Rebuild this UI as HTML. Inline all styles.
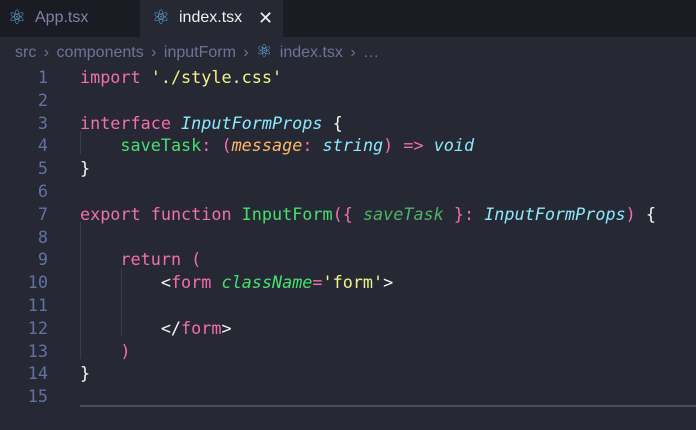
<!DOCTYPE html>
<html><head><style>
html,body{margin:0;height:411px}
body{width:696px;overflow:hidden;background:#262833;font-family:"Liberation Sans",sans-serif;position:relative}
.tabs{position:absolute;left:0;top:0;width:696px;height:37px;background:#1b1c23}
.tab{position:absolute;top:0;height:37px;line-height:36px;font-size:16px}
.ic{position:absolute;top:0;font-size:20px;color:#61b0e0}
.bc{position:absolute;top:41px;left:15px;font-size:16px;color:#6d7499;line-height:20px;word-spacing:3px}
.code{position:absolute;left:0;top:66px;font-family:"DejaVu Sans Mono",monospace;font-size:16.8px;line-height:22.75px;white-space:pre;color:#f8f8f2}
.ln{position:absolute;left:0;width:48px;text-align:right;color:#6272a4}
.tx{position:absolute;left:80px}
.k{color:#f270ab}.s{color:#f1f38c}.g{color:#45e070}.c{color:#8be9fd;font-style:italic}.o{color:#ffb86c;font-style:italic}.gi{color:#4fb36a;font-style:italic}.gi2{color:#45e070;font-style:italic}
.guide{position:absolute;width:1px;background:#3a3d4c}
</style></head><body>
<div class="tabs">
<div class="tab" style="left:0;width:138px;color:#7d84a8"><span class="ic" style="left:8px">⚛</span><span style="position:absolute;left:35px">App.tsx</span></div>
<div class="tab" style="left:140px;width:143px;background:#262833;color:#f0f0f0"><span class="ic" style="left:12px">⚛</span><span style="position:absolute;left:39px">index.tsx</span><span style="position:absolute;left:118px;font-size:18px">✕</span></div>
</div>
<div class="bc">src › components › inputForm › <span style="color:#61b0e0;font-size:18px">⚛</span> index.tsx › …</div>
<div class="guide" style="left:80px;top:131px;height:23px"></div>
<div class="guide" style="left:80px;top:222px;height:137px"></div>
<div class="guide" style="left:121px;top:268px;height:69px"></div>
<div style="position:absolute;left:80px;top:405px;width:616px;height:2px;background:#4a4d5c"></div>
<div class="code">
<div class="ln" style="top:0">1</div><div class="tx" style="top:0"><span class="k">import</span> <span class="s">'./style.css'</span></div>
<div class="ln" style="top:22.8px">2</div>
<div class="ln" style="top:45.6px">3</div><div class="tx" style="top:45.6px"><span class="k">interface</span> <span class="c">InputFormProps</span> {</div>
<div class="ln" style="top:68.4px">4</div><div class="tx" style="top:68.4px">    <span class="g">saveTask</span><span class="k">:</span> <span class="k">(</span><span class="o">message</span><span class="k">:</span> <span class="c">string</span><span class="k">) =&gt;</span> <span class="c">void</span></div>
<div class="ln" style="top:91.2px">5</div><div class="tx" style="top:91.2px">}</div>
<div class="ln" style="top:114px">6</div>
<div class="ln" style="top:136.8px">7</div><div class="tx" style="top:136.8px"><span class="k">export</span> <span class="k">function</span> <span class="g">InputForm</span><span class="k">({</span> <span class="gi">saveTask</span> <span class="k">}:</span> <span class="c">InputFormProps</span><span class="k">)</span> {</div>
<div class="ln" style="top:159.6px">8</div>
<div class="ln" style="top:182.4px">9</div><div class="tx" style="top:182.4px">    <span class="k">return (</span></div>
<div class="ln" style="top:205.2px">10</div><div class="tx" style="top:205.2px">        &lt;<span class="k">form</span> <span class="gi2">className</span><span class="k">=</span><span class="s">'form'</span>&gt;</div>
<div class="ln" style="top:228px">11</div>
<div class="ln" style="top:250.8px">12</div><div class="tx" style="top:250.8px">        &lt;/<span class="k">form</span>&gt;</div>
<div class="ln" style="top:273.6px">13</div><div class="tx" style="top:273.6px">    <span class="k">)</span></div>
<div class="ln" style="top:296.4px">14</div><div class="tx" style="top:296.4px">}</div>
<div class="ln" style="top:318.5px">15</div>
</div>
</body></html>
